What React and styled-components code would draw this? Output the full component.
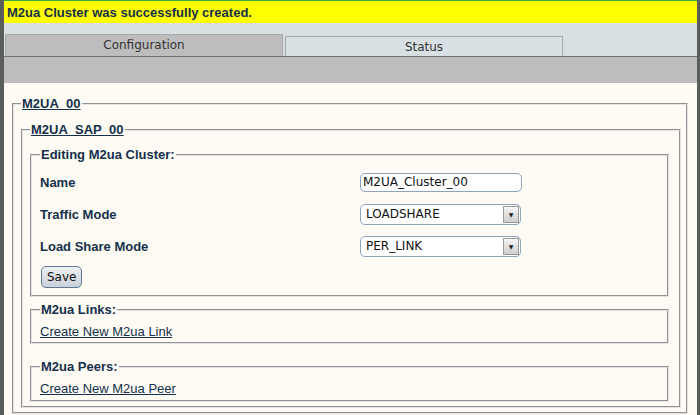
import React from "react";
import styled, { createGlobalStyle } from "styled-components";

const Global = createGlobalStyle`
  html, body { margin: 0; padding: 0; background: #5a5e5a; }
  body { font-family: "Liberation Sans", Arial, sans-serif; font-size: 13px; color: #14304c; }
`;

const Page = styled.div`
  margin: 0 3px 0 4px;
  border-top: 1px solid #3aa83a;
  height: 414px;
  background: #fdfbf3;
  display: flex;
  flex-direction: column;
  overflow: hidden;
`;

const Banner = styled.div`
  background: #ffff00;
  height: 22px;
  display: flex;
  align-items: center;
  padding-left: 3px;
  font-weight: bold;
  font-size: 13px;
  color: #14304c;
`;

const TabBar = styled.div`
  background: #d9e0e4;
  height: 34px;
  display: flex;
  align-items: flex-end;
  padding-left: 1px;
  gap: 2px;
`;

const Tab = styled.div`
  width: 278px;
  height: ${p => (p.$active ? "23px" : "21px")};
  background: ${p => (p.$active ? "#bdbdbd" : "#d9e0e4")};
  border: 1px solid #a9a9a9;
  border-bottom: none;
  display: flex;
  justify-content: center;
  padding-top: 3px;
  box-sizing: border-box;
  font-family: "DejaVu Sans", Verdana, sans-serif;
  font-size: 12px;
  color: #333;
`;

const Band = styled.div`
  height: 26px;
  background: #bdbdbd;
  border-top: 1px solid #6e6e6e;
  margin-top: -1px;
`;

const Content = styled.div`
  padding: 13px 9px 0 8px;
`;

const Field = styled.fieldset`
  margin: ${p => p.$m || "0"};
  border: 2px groove #e4e4e4;
  padding: ${p => p.$pad || "0 8px 4px 8px"};
  min-width: 0;
`;

const LegendLink = styled.legend`
  font-weight: bold;
  font-size: 13px;
  line-height: 16px;
  padding: 0 1px;
  color: #14304c;
  text-decoration: underline;
`;

const Legend = styled.legend`
  font-weight: bold;
  font-size: 13px;
  line-height: 16px;
  padding: 0 1px;
  color: #14304c;
`;

const Row = styled.div`
  display: flex;
  align-items: center;
  height: 32px;
`;

const Label = styled.div`
  width: 320px;
  font-weight: bold;
  color: #14304c;
`;

const Input = styled.div`
  width: 158px;
  height: 17px;
  border: 1px solid #8ea3bc;
  border-radius: 5px;
  background: #fff;
  font-family: "DejaVu Sans", Verdana, sans-serif;
  font-size: 12px;
  line-height: 17px;
  padding-left: 2px;
  color: #111;
`;

const Select = styled.div`
  width: 154px;
  height: 19px;
  border: 1px solid #8ea3bc;
  border-radius: 5px;
  background: #fff;
  display: flex;
  align-items: center;
  justify-content: space-between;
  padding-left: 5px;
  font-family: "DejaVu Sans", Verdana, sans-serif;
  font-size: 12px;
  color: #111;
`;

const Arrow = styled.div`
  width: 14px;
  height: 15px;
  margin-right: 1px;
  background: linear-gradient(#f4f4f4, #cfcfcf);
  border: 1px solid #999;
  display: flex;
  align-items: center;
  justify-content: center;
  font-size: 6px;
  color: #222;
`;

const Button = styled.button`
  font-family: "DejaVu Sans", Verdana, sans-serif;
  font-size: 12px;
  color: #111;
  height: 22px;
  padding: 0 5px;
  border: 1px solid #5f7791;
  border-radius: 5px;
  background: linear-gradient(#eef1f4, #c9d1da);
  margin: 4px 0 7px 1px;
`;

const Link = styled.a`
  color: #14304c;
  text-decoration: underline;
  display: block;
  line-height: 15px;
  margin-top: 6px;
`;

export default function App() {
  return (
    <>
      <Global />
      <Page>
        <Banner>M2ua Cluster was successfully created.</Banner>
        <TabBar>
          <Tab $active>Configuration</Tab>
          <Tab>Status</Tab>
        </TabBar>
        <Band />
        <Content>
          <Field $pad="0 5px 4px 7px">
            <LegendLink>M2UA_00</LegendLink>
            <Field $m="10px 0 0 0" $pad="0 10px 4px 7px">
              <LegendLink>M2UA_SAP_00</LegendLink>
              <Field $m="9px 0 0 0" $pad="3px 8px 0 8px">
                <Legend>Editing M2ua Cluster:</Legend>
                <Row>
                  <Label>Name</Label>
                  <Input>M2UA_Cluster_00</Input>
                </Row>
                <Row>
                  <Label>Traffic Mode</Label>
                  <Select>LOADSHARE<Arrow>▼</Arrow></Select>
                </Row>
                <Row>
                  <Label>Load Share Mode</Label>
                  <Select>PER_LINK<Arrow>▼</Arrow></Select>
                </Row>
                <Button>Save</Button>
              </Field>
              <Field $m="5px 0 0 0" $pad="0 8px 3px 8px">
                <Legend>M2ua Links:</Legend>
                <Link>Create New M2ua Link</Link>
              </Field>
              <Field $m="15px 0 0 0" $pad="0 8px 4px 8px">
                <Legend>M2ua Peers:</Legend>
                <Link>Create New M2ua Peer</Link>
              </Field>
            </Field>
          </Field>
        </Content>
      </Page>
    </>
  );
}
